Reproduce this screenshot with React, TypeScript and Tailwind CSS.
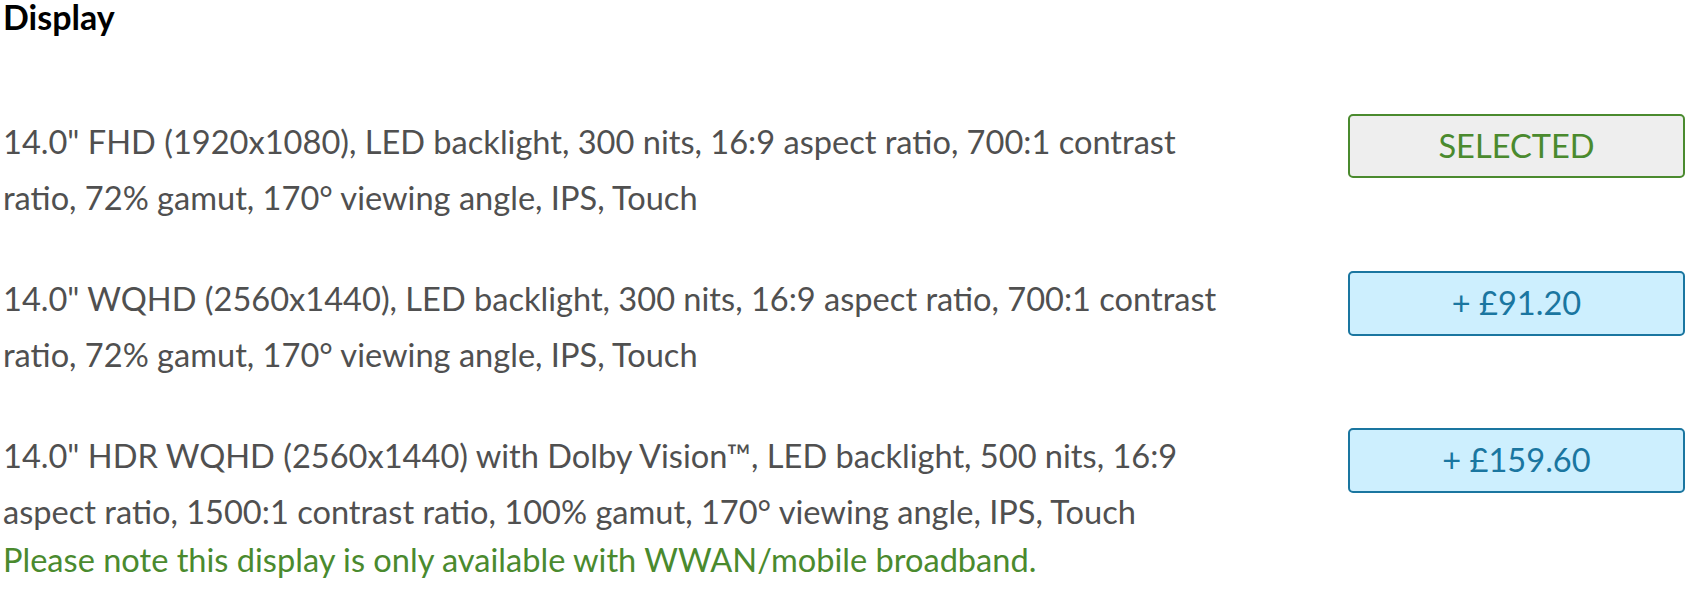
const OPTIONS = [
  {
    text: '14.0" FHD (1920x1080), LED backlight, 300 nits, 16:9 aspect ratio, 700:1 contrast ratio, 72% gamut, 170° viewing angle, IPS, Touch',
    selected: true,
  },
  {
    text: '14.0" WQHD (2560x1440), LED backlight, 300 nits, 16:9 aspect ratio, 700:1 contrast ratio, 72% gamut, 170° viewing angle, IPS, Touch',
    price: '+ £91.20',
  },
  {
    text: '14.0" HDR WQHD (2560x1440) with Dolby Vision™, LED backlight, 500 nits, 16:9 aspect ratio, 1500:1 contrast ratio, 100% gamut, 170° viewing angle, IPS, Touch',
    price: '+ £159.60',
    note: 'Please note this display is only available with WWAN/mobile broadband.',
  },
]

export default function App() {
  return (
    <div className="w-[1690px] h-[590px] bg-white pl-[3px] pr-[5px] font-['Lato',_sans-serif] overflow-hidden">
      <h2 className="text-[34px] font-bold leading-[32px] text-black pt-px">Display</h2>

      <div className="mt-[81px] flex flex-col gap-[45px]">
        {OPTIONS.map((o, i) => (
          <div key={i} className="flex items-start gap-[100px]">
            <div className="flex-1">
              <p className="text-[32.6px] leading-[56px] text-[#505050]">{o.text}</p>
              {o.note && (
                <p className="text-[32.6px] leading-[1.2] text-[#4a8a2e]">{o.note}</p>
              )}
            </div>
            {o.selected ? (
              <button className="w-[337px] h-[64px] shrink-0 flex items-center justify-center rounded-[5px] border-2 border-[#4a8a2e] bg-[#eeeeee] text-[32.6px] leading-none text-[#4a8a2e]">
                SELECTED
              </button>
            ) : (
              <button className="w-[337px] h-[65px] shrink-0 flex items-center justify-center rounded-[5px] border-2 border-[#1a76a0] bg-[#cdeffe] text-[32.6px] leading-none text-[#1a76a0]">
                {o.price}
              </button>
            )}
          </div>
        ))}
      </div>
    </div>
  )
}
